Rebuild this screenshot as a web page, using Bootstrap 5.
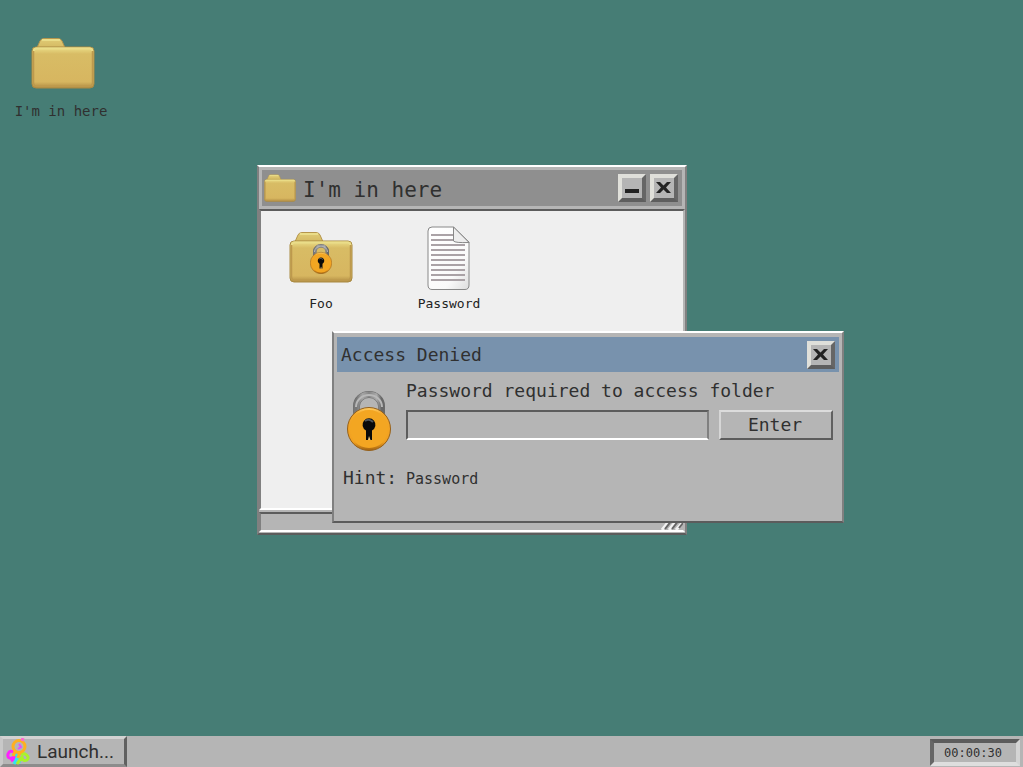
<!DOCTYPE html>
<html lang="en">
<head>
<meta charset="utf-8">
<meta name="viewport" content="width=device-width, initial-scale=1">
<title>Desktop</title>
<link href="https://cdn.jsdelivr.net/npm/bootstrap@5.3.0/dist/css/bootstrap.min.css" rel="stylesheet">
<style>
body { background: #467d75; color: #303030; font-family: "DejaVu Sans Mono", monospace; font-size: 18px; line-height: 24px; }
.face { background: #b5b5b5; }
.frame { position: absolute; background: #b5b5b5; border: 2px solid; border-color: #fff #808080 #5c5c5c #808080; }
/* Positions of the items on the desktop */
.shortcut { position: absolute; left: 0; top: 37px; width: 126px; }
.folder-window { left: 257px; top: 165px; width: 430px; }
.dialog-window { left: 332px; top: 331px; width: 512px; min-height: 192px; z-index: 2; }
.titlebar { background: #8f8f8f; height: 36px; margin: 3px; padding: 0 4px 0 2px; }
.titlebar h1 { font-size: 21px; line-height: 28px; margin: 0 0 0 7px; padding-top: 3px; font-weight: 400; }
.dialog-window .titlebar { background: #7892ad; height: 35px; margin: 4px 3px 0; padding-left: 4px; }
.dialog-window .titlebar h1 { font-size: 18px; margin: 0; padding: 0; line-height: 27px; }
.bevel { width: 28px; height: 28px; padding: 0; background: #b5b5b5; border: 4px solid; border-color: #dfdfda #666 #5e5e5e #e0e0da; color: #222; }
.pane { background: #efefef; height: 301px; border: 2px solid; border-color: #5c5c5c #b5b5b5 #fff #808080; padding: 15px 0 0; }
.pane-item { width: 128px; padding-right: 8px; }
.tile, .tile:hover { color: #222; text-decoration: none; font-size: 13px; line-height: 20px; }
.shortcut.tile, .shortcut.tile:hover { color: #303030; font-size: 14px; }
.tile svg { height: 64px; }
.shortcut.tile svg { height: 52px; }
.statusbar { height: 20px; margin: 2px 0 1px; border: 2px solid; border-color: #5c5c5c #b5b5b5 #fff #808080; }
.dialog-body { padding: 7px 9px 0 9px; }
.dialog-icon { width: 63px; }
.field { height: 30px; min-width: 0; background: #b5b5b5; border: 2px solid; border-color: #5c5c5c #808080 #fff #5c5c5c; border-radius: 0; }
.push { width: 114px; height: 30px; line-height: 24px; margin-left: 10px; padding: 0 2px 0 0; background: #b5b5b5; border: 2px solid; border-color: #dcdcdc #606060 #5c5c5c #d6d6d6; color: #303030; }
.lock-holder { padding: 12px 0 0 4px; }
.label-gap { margin-bottom: 7px; }
.hint-row { margin-top: 15px; }
.hint-value { font-size: 15px; }
.taskbar { height: 31px; }
.launch { width: 127px; height: 31px; padding: 0 0 0 3px; border: 3px solid; border-color: #d2d2d2 #606060 #8c8c8c #c8c8c8; color: #303030; font: 19px/24px Roboto, sans-serif; background: #b5b5b5; }
.launch svg { margin-right: 7px; }
.clock { width: 90px; height: 27px; margin: 3px 3px 1px; border: 4px solid; border-color: #5c5c5c #d4d4d4 #dedede #666; padding-right: 4px; font-size: 12px; line-height: 20px; }
</style>
</head>
<body class="vh-100 overflow-hidden d-flex flex-column">
<svg width="0" height="0" class="position-absolute" aria-hidden="true">
  <defs>
    <linearGradient id="gold" x1="0" y1="0" x2="0" y2="1"><stop offset="0" stop-color="#ece08a"/><stop offset=".17" stop-color="#d8bc65"/><stop offset=".85" stop-color="#d7b660"/><stop offset="1" stop-color="#b08b42"/></linearGradient>
    <linearGradient id="tab" x1="0" y1="0" x2="0" y2="1"><stop offset="0" stop-color="#e0cc76"/><stop offset="1" stop-color="#d2b55e"/></linearGradient>
    <linearGradient id="steel"><stop offset="0" stop-color="#777"/><stop offset=".25" stop-color="#a5a5a5"/><stop offset=".5" stop-color="#858585"/><stop offset=".8" stop-color="#aaa"/><stop offset="1" stop-color="#686868"/></linearGradient>
    <linearGradient id="orange" x1="0" y1="0" x2="0" y2="1"><stop offset="0" stop-color="#ffd06a"/><stop offset=".15" stop-color="#f5a829"/><stop offset=".8" stop-color="#f0a020"/><stop offset="1" stop-color="#a26310"/></linearGradient>
    <linearGradient id="paper" x1="0" y1="0" x2="1" y2="1"><stop offset="0" stop-color="#fff"/><stop offset=".7" stop-color="#fafafa"/><stop offset="1" stop-color="#ddd"/></linearGradient>
  </defs>
  <symbol id="folder" viewBox="0 0 64 52">
    <path d="M5 13L9 4Q10 1.500 13 1.500H27Q30 1.500 31 4L35 13Z" fill="url(#tab)" stroke="#b6964c"/>
    <path d="M11 3H29" stroke="#eadd89" stroke-width="2"/>
    <rect x="1" y="10" width="62" height="41" rx="4" fill="url(#gold)" stroke="#a98a43"/>
    <path d="M3 14Q3 11.500 5 11.500H59Q61 11.500 61.500 14" fill="none" stroke="#eadd89" stroke-width="2"/>
    <path d="M61.500 14V46Q61 49.500 57 49.500H7Q3 49.500 2.500 46V14" fill="none" stroke="#bd994d" stroke-width="1.500"/>
  </symbol>
  <symbol id="padlock" viewBox="0 0 44 60">
    <path d="M9.500 27V15A12.500 11.500 0 0 1 34.500 15V27" fill="none" stroke="#6b6b6b" stroke-width="7"/>
    <path d="M9.500 27V15A12.500 11.500 0 0 1 34.500 15V27" fill="none" stroke="url(#steel)" stroke-width="6"/>
    <path d="M9 16A13 12 0 0 1 35 16" fill="none" stroke="#b8b8b8" stroke-width="2"/>
    <circle cx="22" cy="38" r="21.500" fill="url(#orange)" stroke="#95601b"/>
    <circle cx="22" cy="38" r="19" fill="#f3a622"/>
    <path d="M19 49V39.500A6.500 6.500 0 1 1 25 39.500V49Z" fill="#0a0a0a"/>
    <path d="M18 30Q22 27 26 31" fill="none" stroke="#4f555b" stroke-width="2"/>
    <path d="M21 49L22 45L23.500 49Z" fill="#f6cc7c"/>
  </symbol>
  <symbol id="cross" viewBox="0 0 20 20"><path d="M2 4H6L9.500 7.500L13 4H17L12 9.500L17 15H13L9.500 11.500L6 15H2L7 9.500Z" fill="#222"/></symbol>
</svg>

<main class="flex-grow-1 position-relative">
  <a href="#" class="tile shortcut d-flex flex-column align-items-center">
    <svg width="64"><use href="#folder"/></svg>
    <span class="mt-2 pt-1 pe-1">I'm in here</span>
  </a>

  <section class="frame folder-window">
    <header class="titlebar d-flex align-items-center">
      <svg width="32" height="28" viewBox="0 0 64 52" preserveAspectRatio="none"><use href="#folder" width="64" height="52"/></svg>
      <h1 class="flex-grow-1">I'm in here</h1>
      <div class="d-flex gap-1">
        <button class="bevel d-flex" type="button" aria-label="Minimize"><svg width="20" height="20" viewBox="0 0 20 20"><path d="M3 11H17V15H3Z" fill="#222"/></svg></button>
        <button class="bevel d-flex" type="button" aria-label="Close"><svg width="20" height="20"><use href="#cross"/></svg></button>
      </div>
    </header>
    <div class="pane d-flex">
      <div class="pane-item d-flex justify-content-center">
        <a href="#" class="tile d-flex flex-column align-items-center">
          <svg width="64" viewBox="0 0 64 64"><use href="#folder" y="5" width="64" height="52"/><use href="#padlock" x="21" y="18" width="22" height="30"/></svg>
          <span class="mt-1">Foo</span>
        </a>
      </div>
      <div class="pane-item d-flex justify-content-center">
        <a href="#" class="tile d-flex flex-column align-items-center">
          <svg width="64" viewBox="0 0 64 64">
            <path d="M15 1H36.500L52 16V59Q52 63.500 48 63.500H15Q11 63.500 11 59V5Q11 1 15 1Z" fill="url(#paper)" stroke="#888"/>
            <path d="M14 9H36M14 14H36M14 19H48M14 24H48M14 29H48M14 34H48M14 39H48M14 44H48M14 49H48M14 54H48" stroke="#aaa2a6" stroke-width="2"/>
            <path d="M36.500 1V15Q38 17 52 16.500Z" fill="#ededed" stroke="#888"/>
          </svg>
          <span class="mt-1">Password</span>
        </a>
      </div>
    </div>
    <footer class="statusbar d-flex justify-content-end align-items-end">
      <svg width="22" height="10" viewBox="0 0 22 10"><path d="M1 10L9 0M8 10L16 0M15 10L22 2" stroke="#f2f2f2" stroke-width="3"/><path d="M4 9L11 0M11 9L18 0M18 8L22 3" stroke="#666" stroke-width="2"/></svg>
    </footer>
  </section>

  <section class="frame dialog-window" role="dialog" aria-labelledby="dialog-title">
    <header class="titlebar d-flex align-items-center">
      <h1 id="dialog-title" class="flex-grow-1">Access Denied</h1>
      <button class="bevel d-flex" type="button" aria-label="Close"><svg width="20" height="20"><use href="#cross"/></svg></button>
    </header>
    <form class="dialog-body">
      <div class="d-flex">
        <div class="dialog-icon lock-holder"><svg class="d-block" width="44" height="60"><use href="#padlock"/></svg></div>
        <div class="flex-grow-1">
          <label for="password" class="d-block label-gap">Password required to access folder</label>
          <div class="d-flex">
            <input id="password" type="password" class="field flex-grow-1">
            <button type="button" class="push">Enter</button>
          </div>
        </div>
      </div>
      <div class="hint-row d-flex align-items-baseline">
        <span class="dialog-icon">Hint:</span>
        <span class="hint-value">Password</span>
      </div>
    </form>
  </section>
</main>

<footer class="taskbar face d-flex justify-content-between">
  <button type="button" class="launch d-flex align-items-center">
    <svg width="24" height="28" viewBox="0 0 24 28" class="flex-shrink-0">
      <g fill="none" stroke-width="3">
        <path d="M9 15Q4 11 2 16Q1 21 6 20Q11 18 10 13M9 20L5 23" stroke="#ff20ff"/>
        <path d="M9 16L14 20L13 25M8 26L11 20" stroke="#2fe6f2"/>
        <path d="M14 15L19 16Q24 19 21 22Q17 24 16 19L11 26" stroke="#a9f22b"/>
        <circle cx="13" cy="8.500" r="6" stroke="#ffb01f"/>
        <path d="M9 14L7 18M14 14L12 20" stroke="#ffb01f"/>
        <path d="M13 6L15 9L12 11" stroke="#e84cff" stroke-width="2"/>
        <path d="M15 1L18 2" stroke="#ff66cf"/>
      </g>
    </svg>
    <span>Launch...</span>
  </button>
  <div class="clock text-center">00:00:30</div>
</footer>
<script src="https://cdn.jsdelivr.net/npm/bootstrap@5.3.0/dist/js/bootstrap.bundle.min.js"></script>
</body>
</html>
